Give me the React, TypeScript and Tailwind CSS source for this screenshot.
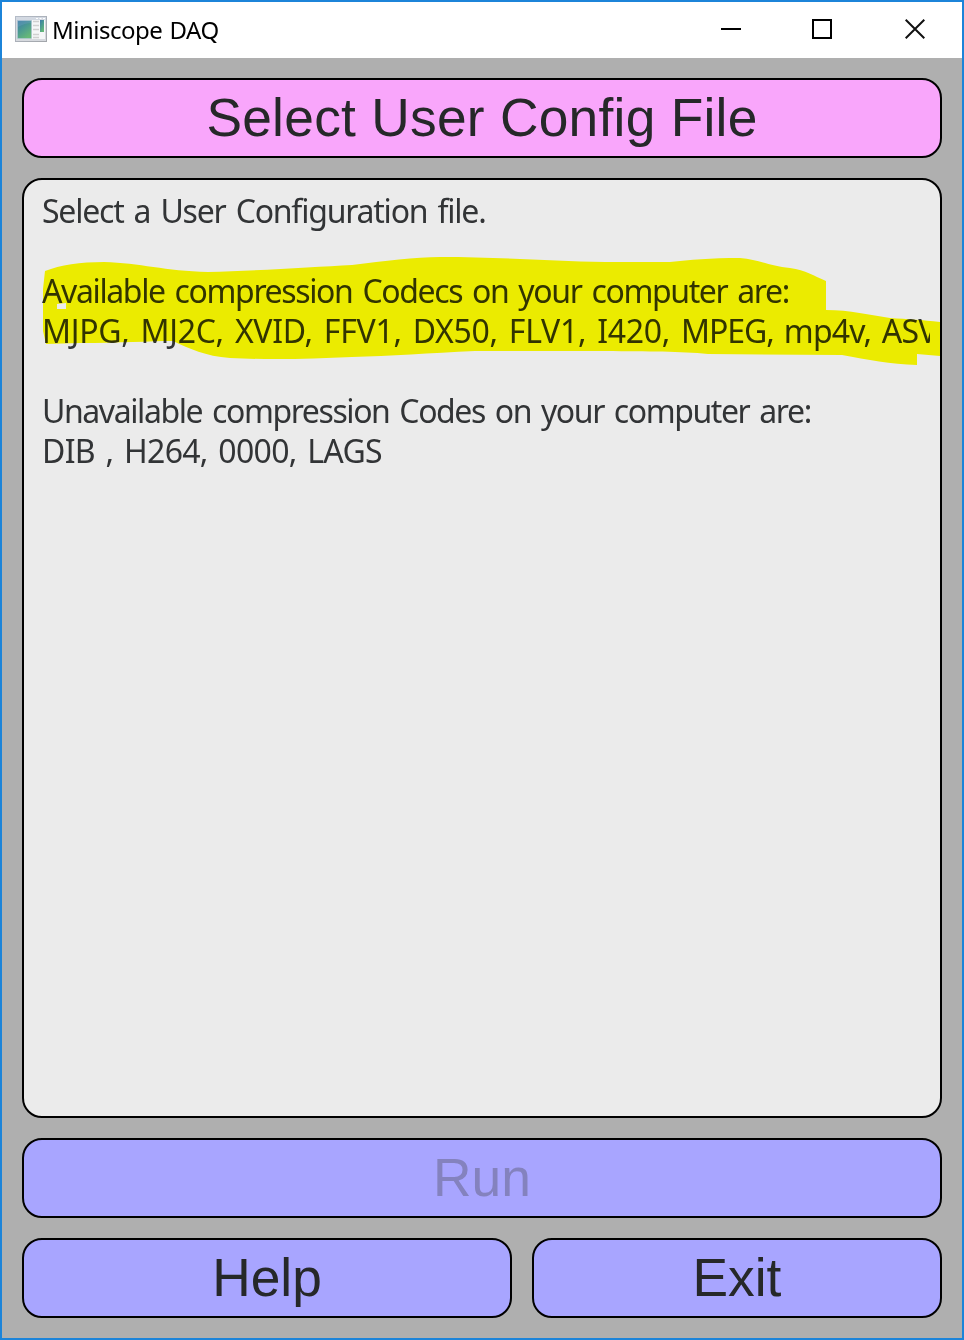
import type { ReactNode } from "react";

function AppIcon() {
  return (
    <svg width="32" height="26" viewBox="0 0 32 26" aria-hidden="true">
      <defs>
        <linearGradient id="pane" x1="0" y1="0" x2="0.6" y2="1">
          <stop offset="0" stopColor="#3b78a8" />
          <stop offset="0.5" stopColor="#4b9a92" />
          <stop offset="1" stopColor="#66b878" />
        </linearGradient>
        <linearGradient id="frame" x1="0" y1="0" x2="1" y2="1">
          <stop offset="0" stopColor="#b4bcc8" />
          <stop offset="1" stopColor="#a2a5aa" />
        </linearGradient>
      </defs>
      <rect x="0.5" y="0.5" width="31" height="25" fill="#d6d9de" stroke="url(#frame)" />
      <rect x="1" y="1" width="30" height="3" fill="#d3d9e2" />
      <path d="M21 2.5h2M24.5 2.5h2M28 2.5h2" stroke="#fff" />
      <rect x="2" y="4" width="28" height="19" fill="#f6f7f8" />
      <rect x="2.500" y="4.500" width="14" height="18" fill="url(#pane)" stroke="#a9bfd0" strokeWidth="0.6" />
      <path d="M3 11Q10 7 16 7V5H3Z" fill="#6ba1bd" opacity="0.4" />
      <path d="M18 5.500h6M18 9.500h6M18 13.500h6M18 18.500h6M18 21.500h6" stroke="#d0d0d0" strokeWidth="1.5" />
      <rect x="25" y="4" width="4" height="12" fill="url(#pane)" />
    </svg>
  );
}

function TitleBar() {
  return (
    <header className="flex h-14 shrink-0 items-start bg-white pl-[13px] text-black">
      <div className="mt-[14px]">
        <AppIcon />
      </div>
      <h1 className="ml-[5px] mt-[10px] grow font-['Noto_Sans'] text-[24px] leading-[36px] tracking-[-0.5px] [word-spacing:1.5px] whitespace-nowrap">
        Miniscope DAQ
      </h1>
      <div className="mt-[16px] mr-[37px] flex gap-[71px]">
        <button aria-label="Minimize" className="h-[22px] w-5">
          <svg width="20" height="22" viewBox="0 0 20 22"><path d="M0 11h20" stroke="currentColor" strokeWidth="2" /></svg>
        </button>
        <button aria-label="Maximize" className="h-[22px] w-5">
          <svg width="20" height="22" viewBox="0 0 20 22"><rect x="1" y="2" width="18" height="18" fill="none" stroke="currentColor" strokeWidth="2" /></svg>
        </button>
        <button aria-label="Close" className="ml-[2px] h-[22px] w-5">
          <svg width="20" height="22" viewBox="0 0 20 22"><path d="m.7 1.700 18.600 18.600m0-18.600L.7 20.300" fill="none" stroke="#111" strokeWidth="2" /></svg>
        </button>
      </div>
    </header>
  );
}

function ActionButton({ className, children, disabled }: { className: string; children: ReactNode; disabled?: boolean }) {
  return (
    <button
      disabled={disabled}
      className={`flex h-20 shrink-0 items-center justify-center rounded-[20px] border-2 border-black font-['Liberation_Sans'] text-[53.300px] leading-[60px] ${className}`}
    >
      {children}
    </button>
  );
}

function Highlight() {
  return (
    <svg className="pointer-events-none absolute inset-0 size-full mix-blend-multiply" viewBox="24 180 916 936" aria-hidden="true">
      <path
        fill="#ffff00"
        fillRule="evenodd"
        d="M45 271Q68 262 104 262C140 263 165 271 208 272C254 271 315 267 352 265C385 261 415 257 440 257C500 257 550 261 605 262H670C690 260 710 258 740 258C760 260 770 266 790 268C806 270 814 276 826 281V310C850 310 870 315 890 318C908 319 922 320 940 322V356L917 354V365C890 364 868 360 842 355L708 354C680 351 650 352 605 351H475C430 353 390 356 352 357C310 359 270 360 230 358C205 356 190 349 173 341C150 341 120 343 80 343L46 344L43 331V289L45 271ZM57 304V309H66V303Z"
      />
    </svg>
  );
}

function StatusPanel() {
  return (
    <main className="relative mt-5 h-[940px] shrink-0 overflow-hidden rounded-[20px] border-2 border-black bg-[#ebebeb]">
      <div className="mr-[10px] ml-[18px] overflow-hidden pt-[11px] font-['Noto_Sans'] text-[32px] leading-10 whitespace-pre text-[#323436] [word-spacing:3px]">
        <p className="tracking-[-1.22px]">Select a User Configuration file.</p>
        <p className="mt-10 tracking-[-1.38px]">Available compression Codecs on your computer are:</p>
        <p className="tracking-[-0.3px]">
          MJPG, MJ2C, XVID, FFV1, DX50, FLV1, I420, <span className="tracking-[-1.1px]">MPEG, </span>
          <span className="tracking-[-0.8px]">mp4v, ASV1</span>
        </p>
        <p className="mt-10 tracking-[-1.42px]">Unavailable compression Codes on your computer are:</p>
        <p className="tracking-[-0.7px]">DIB , H264, 0000, LAGS</p>
      </div>
      <Highlight />
    </main>
  );
}

export default function App() {
  return (
    <div className="flex h-[1340px] w-[964px] flex-col border-2 border-[#1c84d9] bg-[#afafaf]">
      <TitleBar />
      <div className="flex flex-col p-5">
        <ActionButton className="bg-[#f9a6fb] tracking-[0.27px] text-[#262829]">Select User Config File</ActionButton>
        <StatusPanel />
        <ActionButton disabled className="mt-5 bg-[#a8a5ff] text-[#8482be]">Run</ActionButton>
        <div className="mt-5 flex gap-5">
          <ActionButton className="w-[490px] bg-[#a8a5ff] text-[#262829]">Help</ActionButton>
          <ActionButton className="w-[410px] bg-[#a8a5ff] text-[#262829]">Exit</ActionButton>
        </div>
      </div>
    </div>
  );
}
